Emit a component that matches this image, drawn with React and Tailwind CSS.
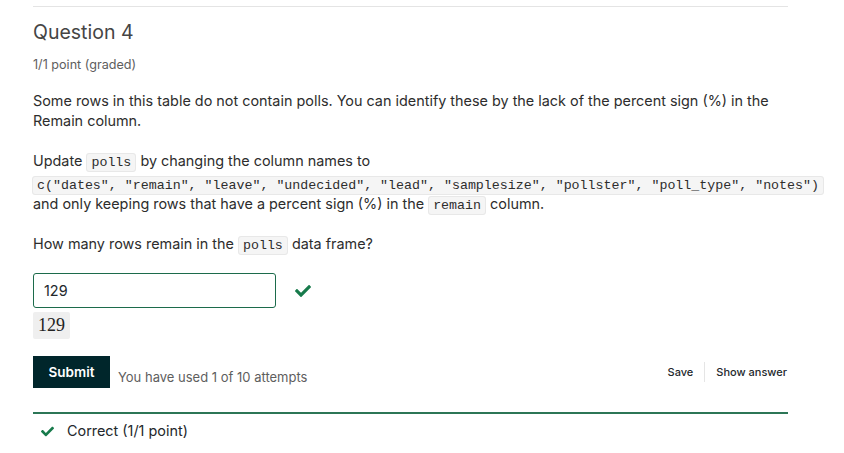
import React from "react";

const Check = ({ className }) => (
  <svg viewBox="0 0 512 512" className={className} fill="currentColor">
    <path d="M173.9 439.4l-166.4-166.4c-10-10-10-26.2 0-36.2l36.2-36.2c10-10 26.2-10 36.2 0L192 312.7 432.1 72.6c10-10 26.2-10 36.2 0l36.2 36.2c10 10 10 26.2 0 36.2l-294.4 294.4c-10 10-26.2 10-36.2 0z" />
  </svg>
);

const Code = ({ children }) => (
  <code className="font-['Liberation_Mono',monospace] text-[13.3px] leading-[14px] bg-[#f5f5f5] border border-[#e8e8e8] rounded-[3px] px-[4px] py-[1px]">
    {children}
  </code>
);

export default function App() {
  return (
    <div className="w-[844px] h-[453px] bg-white overflow-hidden font-['Inter',sans-serif] text-[#23282c]">
      <div className="ml-[33px] w-[755px] pt-[6px]">
        <div className="h-px bg-[#e4e4e4]" />
        <h2 className="mt-[11px] text-[19.5px] leading-[28px] text-[#454545]">Question 4</h2>
        <div className="mt-[11px] text-[12.6px] leading-[16px] text-[#5e5e5e]">1/1 point (graded)</div>
        <div className="mt-[18px] text-[14.4px] leading-[20px] text-[#2d2d2d]">
          <p>
            Some rows in this table do not contain polls. You can identify these by the lack of the percent sign (%) in the Remain column.
          </p>
          <p className="mt-[20px]">
            Update <Code>polls</Code> by changing the column names to
          </p>
          <p className="whitespace-nowrap mt-[3px] -ml-[1px]">
            <Code>c("dates", "remain", "leave", "undecided", "lead", "samplesize", "pollster", "poll_type", "notes")</Code>
          </p>
          <p>
            and only keeping rows that have a percent sign (%) in the <Code>remain</Code> column.
          </p>
          <p className="mt-[20px]">
            How many rows remain in the <Code>polls</Code> data frame?
          </p>
        </div>
        <div className="mt-[19px] flex items-center">
          <div className="w-[243px] h-[35px] border border-[#1c6b4b] rounded-[3px] flex items-center px-[10px] text-[14.4px] text-[#23282c]">
            129
          </div>
          <Check className="ml-[19px] w-[16px] h-[16px] text-[#177a4b]" />
        </div>
        <div className="mt-[4px] inline-flex items-center bg-[#efefef] rounded-[2px] px-[5px] h-[27px] font-['Liberation_Serif',serif] text-[18px] text-[#222]">
          129
        </div>
        <div className="mt-[17px] flex items-center">
          <button className="h-[32px] w-[77px] bg-[#00262b] text-white text-[13.5px] font-semibold flex items-center justify-center">
            Submit
          </button>
          <span className="ml-[8px] mt-[12px] text-[13px] text-[#5e5e5e]">You have used 1 of 10 attempts</span>
          <div className="ml-auto flex items-center text-[11px] font-medium text-[#23282c]">
            <span className="px-[11px]">Save</span>
            <span className="w-px h-[20px] bg-[#e5e5e5]" />
            <span className="pl-[11px] pr-[1px]">Show answer</span>
          </div>
        </div>
        <div className="mt-[24px] h-[2px] bg-[#2c7656]" />
        <div className="mt-[7px] flex items-center h-[20px] pl-[8px]">
          <Check className="w-[13px] h-[13px] text-[#177a4b]" />
          <span className="ml-[13px] text-[14.4px] text-[#23282c]">Correct (1/1 point)</span>
        </div>
      </div>
    </div>
  );
}
